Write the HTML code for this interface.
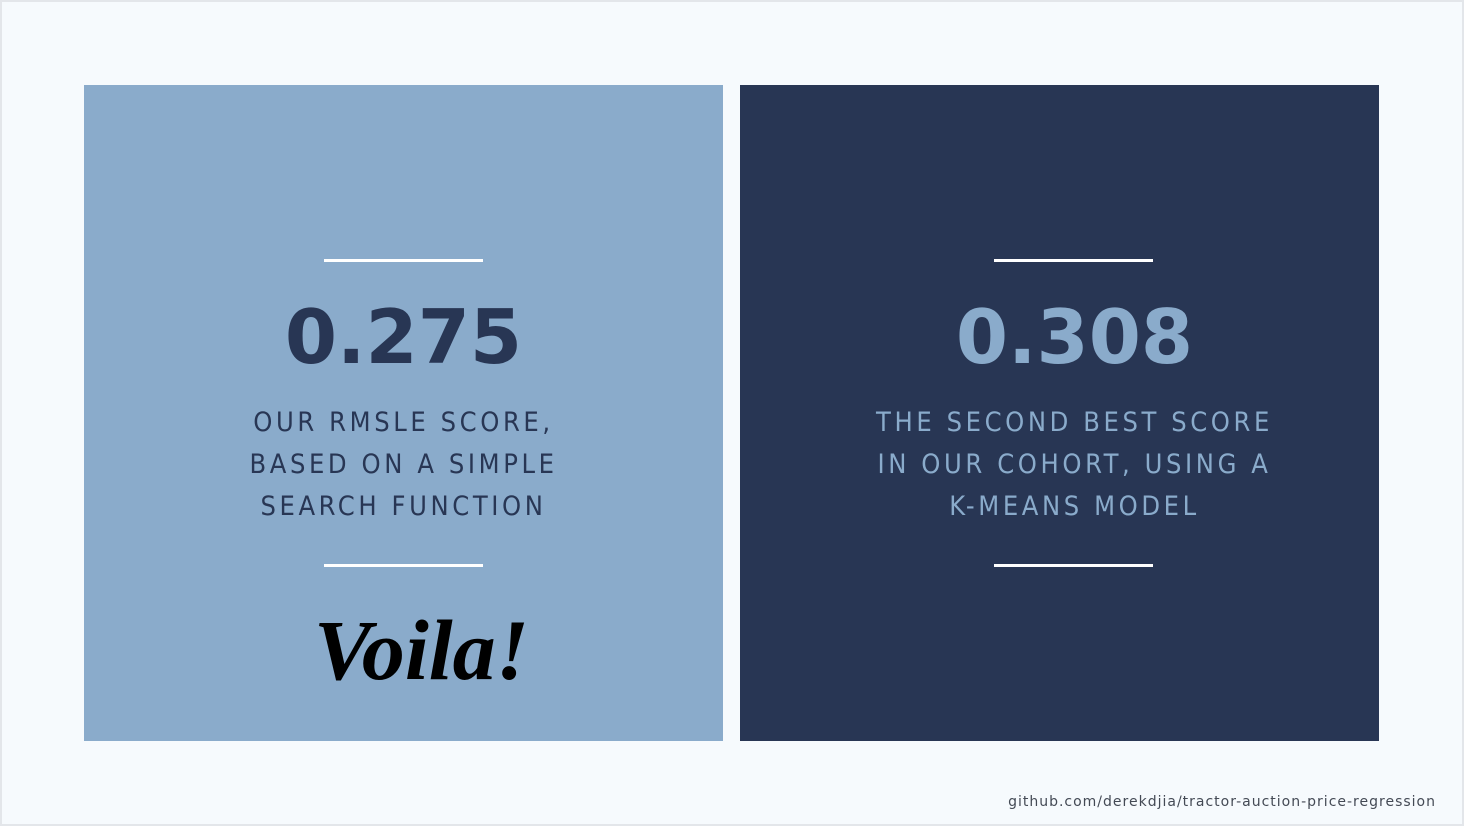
<!DOCTYPE html>
<html><head><style>
html,body{margin:0;padding:0}
body{width:1464px;height:826px;background:#f6fafd;position:relative;overflow:hidden;font-family:"DejaVu Sans","Liberation Sans",sans-serif}
.frame{position:absolute;left:0;top:0;width:1460px;height:822px;border:2px solid #e3e6ea}
.p{position:absolute;top:85px;width:639px;height:656px}
.l{left:84px;background:#8aabcb}
.r{left:740px;background:#283654}
.line{position:absolute;left:240px;width:159px;height:3px;background:#fff}
.num{position:absolute;left:0;width:100%;text-align:center;font-family:"DejaVu Sans",sans-serif;font-weight:bold;font-size:75px;letter-spacing:0px;line-height:100px}
.txt{position:absolute;left:0;width:100%;top:317px;text-align:center;font-size:27px;letter-spacing:3.6px;line-height:42px;font-family:"DejaVu Sans Condensed","DejaVu Sans",sans-serif}
.voila{position:absolute;left:230px;top:515px;font-family:"Liberation Serif",serif;font-style:italic;font-weight:bold;font-size:86px;color:#000}
.gh{position:absolute;right:28px;top:794px;font-size:14px;color:#444a55;letter-spacing:1px}
</style></head><body>
<div class="frame"></div>
<div class="p l">
<div class="line" style="top:174px"></div>
<div class="num" style="top:202px;color:#283654">0.275</div>
<div class="txt" style="color:#283654">OUR RMSLE SCORE,<br>BASED ON A SIMPLE<br>SEARCH FUNCTION</div>
<div class="line" style="top:479px"></div>
<div class="voila">Voila!</div>
</div>
<div class="p r">
<div class="line" style="top:174px;left:254px"></div>
<div class="num" style="top:202px;left:15px;color:#8aabcb">0.308</div>
<div class="txt" style="left:15px;color:#8aabcb">THE SECOND BEST SCORE<br>IN OUR COHORT, USING A<br>K-MEANS MODEL</div>
<div class="line" style="top:479px;left:254px"></div>
</div>
<div class="gh">github.com/derekdjia/tractor-auction-price-regression</div>
</body></html>
